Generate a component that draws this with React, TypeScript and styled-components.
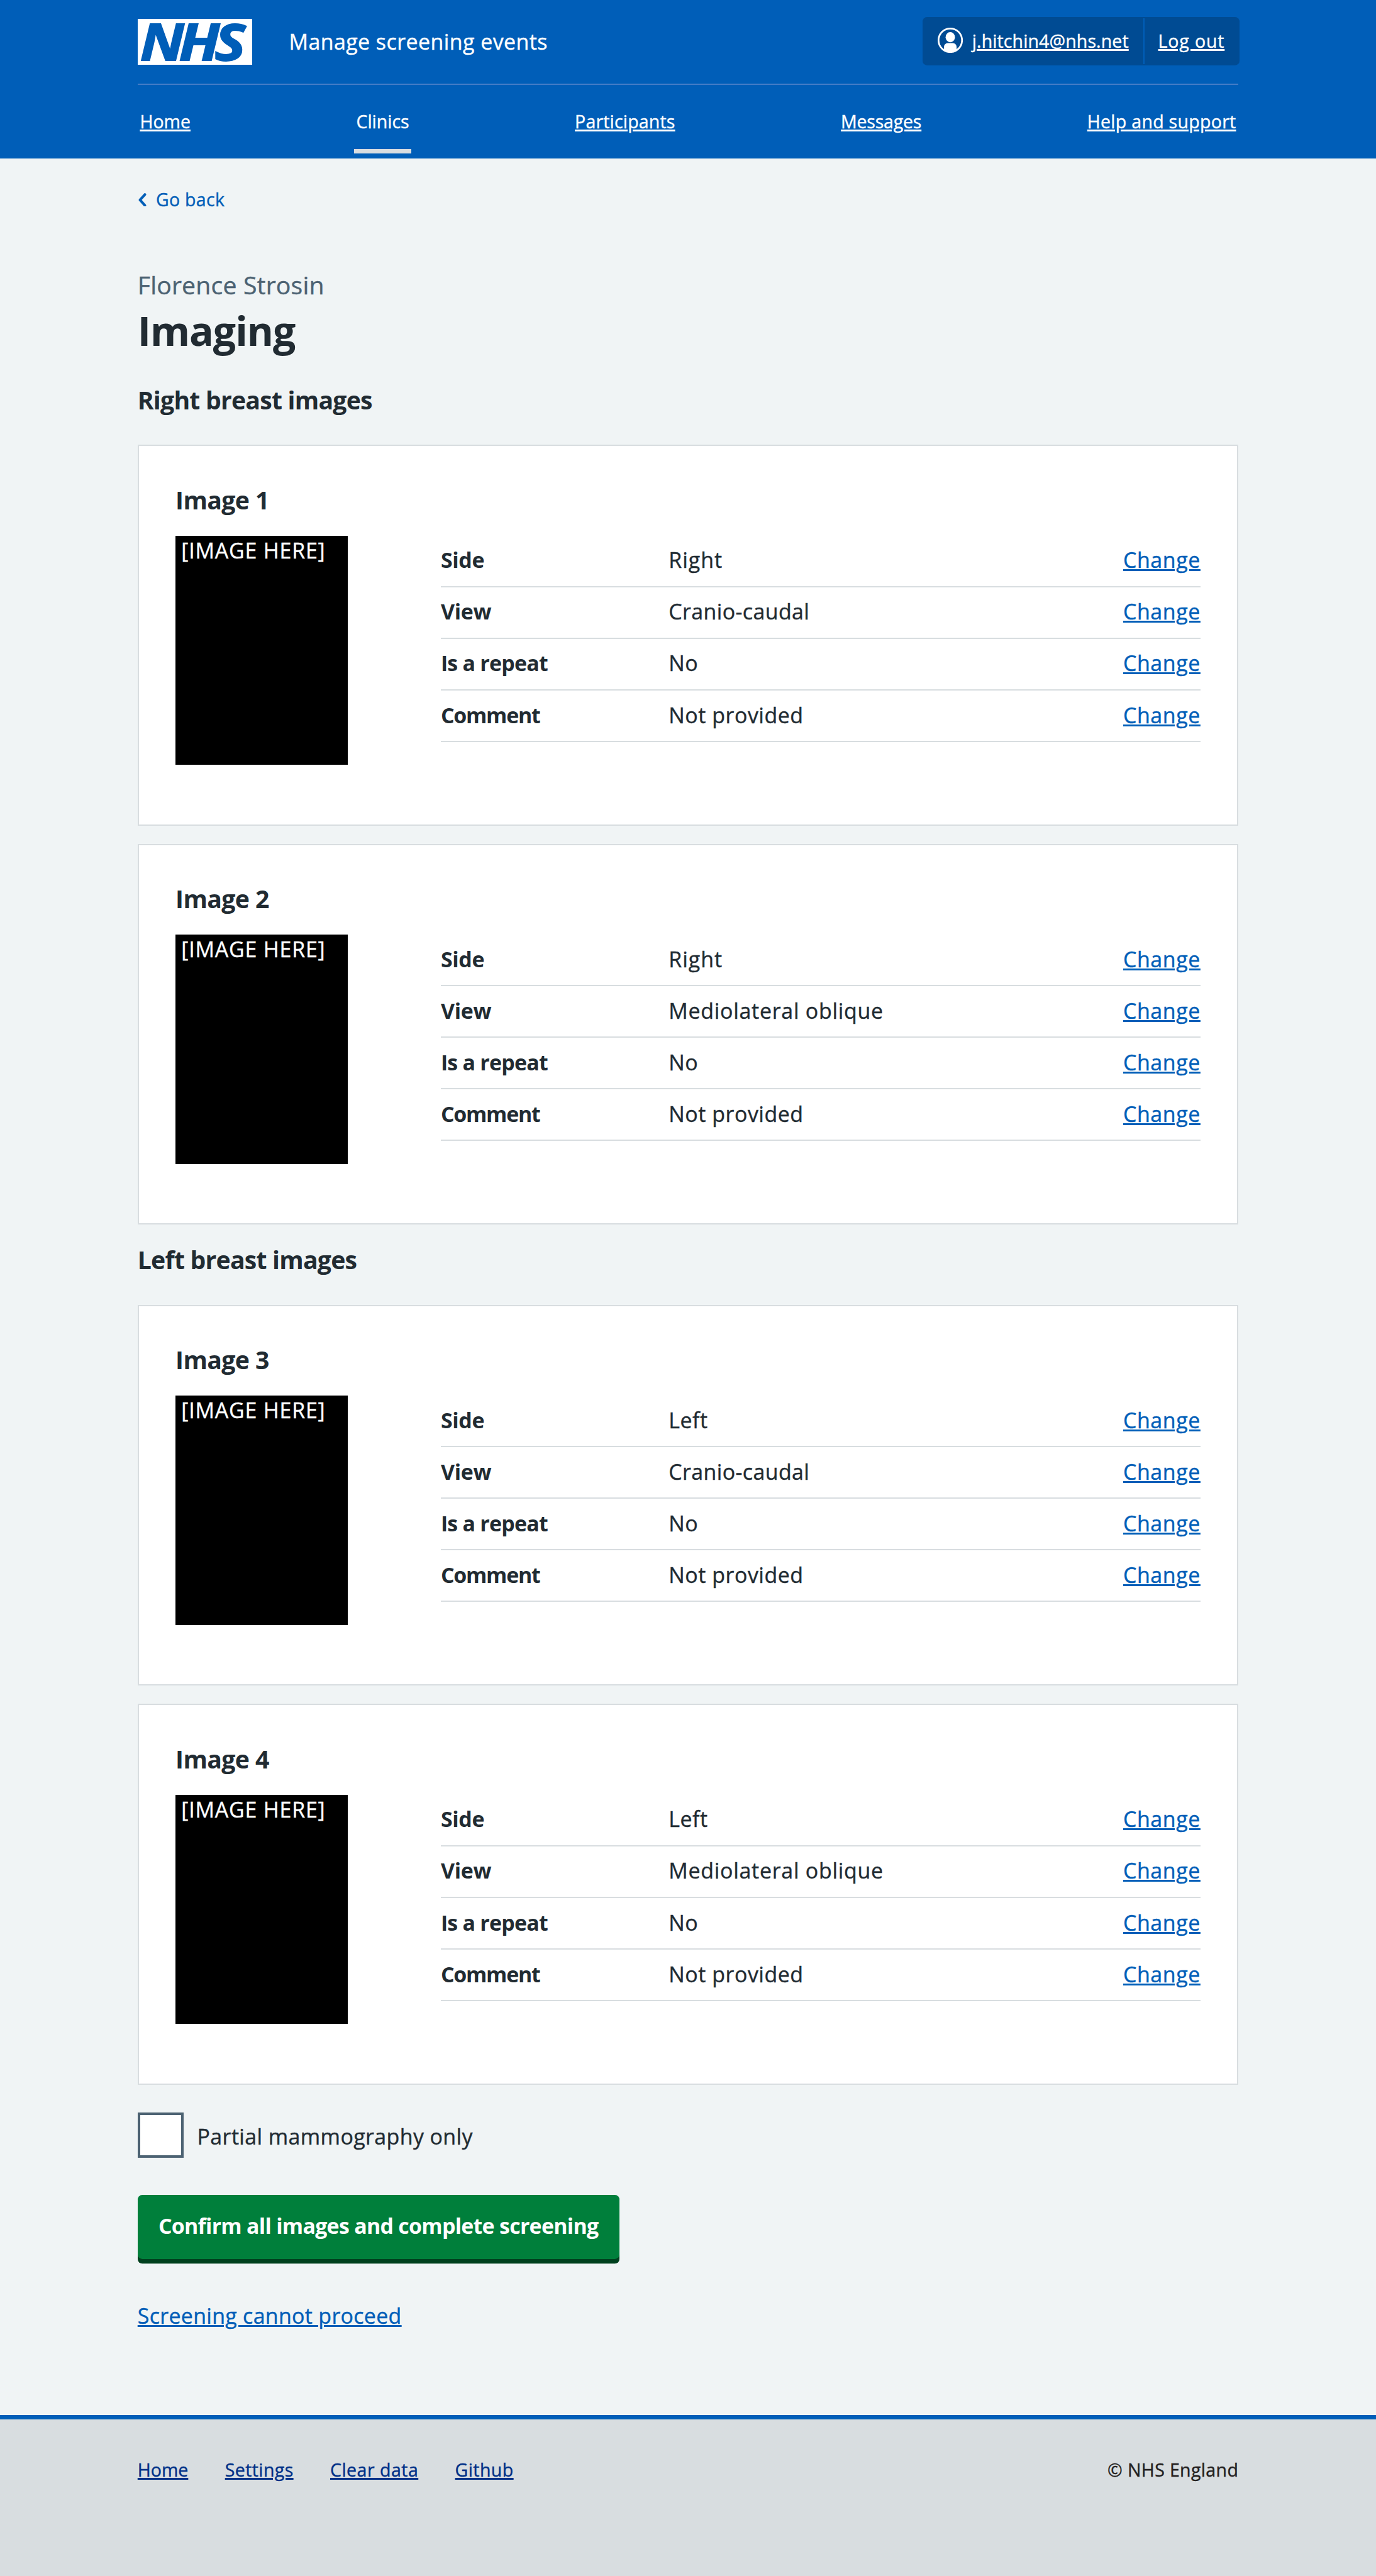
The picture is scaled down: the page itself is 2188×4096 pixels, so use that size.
import React from 'react';
import styled, { createGlobalStyle } from 'styled-components';

const SCALE = 0.9117;
const u = (n: number) => `${+(n * SCALE).toFixed(3)}px`;

const color = {
  blue: '#005eb8',
  blueShade: '#004b93',
  darkBlue: '#003087',
  text: '#212b32',
  secondary: '#4c6272',
  border: '#d8dde0',
  page: '#f0f4f5',
  green: '#007f3b',
  greenShade: '#00401e',
};

const GlobalStyle = createGlobalStyle`
  *, *::before, *::after { box-sizing: border-box; }
  body {
    margin: 0;
    background: ${color.page};
    color: ${color.text};
    font-family: "Open Sans", "Noto Sans", sans-serif;
    font-size: ${u(37.2)};
    line-height: ${u(56)};
    -webkit-text-stroke-width: 0.4px;
  }
  a { color: ${color.blue}; text-decoration-line: underline; text-decoration-thickness: ${u(3)}; text-underline-offset: ${u(2.6)}; }
  h1, h2, h3, dt, button, svg { -webkit-text-stroke-width: 0; }
  h1, h2, h3, p, ul, dl, dd, dt { margin: 0; padding: 0; }
  ul { list-style: none; }
`;

const Page = styled.div`
  display: flex;
  flex-direction: column;
  min-height: 4096px;
`;

const Container = styled.div`
  width: ${u(1920)};
  margin: 0 auto;
`;

const Track = styled.span<{ $em: number }>`
  letter-spacing: ${(p) => p.$em}em;
`;

/* Header */
const Header = styled.header`
  background: ${color.blue};
  color: #fff;
  height: ${u(276)};
`;

const Brand = styled.div`
  display: flex;
  align-items: flex-start;
  height: ${u(148)};
  border-bottom: 2px solid #447cc6;
`;

const Logo = styled.svg`
  display: block;
  width: ${u(200)};
  height: ${u(80)};
  margin-top: ${u(33)};
  background: #fff;
`;

const ServiceName = styled.span`
  margin: ${u(44.5)} auto 0 ${u(64)};
  letter-spacing: 0.0135em;
  white-space: nowrap;
`;

const Account = styled.div`
  display: flex;
  width: ${u(553)};
  height: ${u(84)};
  margin: ${u(30)} ${u(-2)} 0 0;
  padding: 2px 0;
  border-radius: ${u(8)};
  background: ${color.blueShade};
  font-size: ${u(31.3)};
  line-height: ${u(40)};
  white-space: nowrap;
  a { color: #fff; margin-top: ${u(19.5)}; }
`;

const AccountUser = styled.div`
  display: flex;
  align-items: flex-start;
  width: ${u(387)};
  padding-left: ${u(26)};
  border-right: 2px solid ${color.blue};
  svg { width: ${u(44)}; height: ${u(44)}; margin: ${u(16)} ${u(16.5)} 0 0; }
`;

const AccountAction = styled.div`
  display: flex;
  align-items: flex-start;
  padding-left: ${u(24)};
`;

const Nav = styled.ul`
  display: flex;
  justify-content: space-between;
  font-size: ${u(31.3)};
  line-height: ${u(40)};
`;

const NavItem = styled.li<{ $current?: boolean }>`
  height: ${u(120)};
  padding: ${u(44)} ${u(4)} 0;
  border-bottom: ${u(8)} solid ${(p) => (p.$current ? color.border : 'transparent')};
  a { color: #fff; text-decoration-line: ${(p) => (p.$current ? 'none' : 'underline')}; }
`;

/* Main */
const Main = styled.main`
  display: flex;
  flex-direction: column;
  align-items: flex-start;
`;

const BackLink = styled.a`
  && { display: flex; align-items: center; text-decoration: none; }
  margin-top: ${u(51.5)};
  font-size: ${u(31.3)};
  line-height: ${u(40)};
  letter-spacing: 0.01em;
  svg { width: ${u(16)}; height: ${u(24)}; margin: ${u(1.5)} ${u(16)} 0 0; }
`;

const Caption = styled.p`
  margin-top: ${u(99.6)};
  font-size: ${u(43)};
  line-height: ${u(60)};
  letter-spacing: 0.004em;
  color: ${color.secondary};
`;

const Title = styled.h1`
  margin-top: ${u(8.8)};
  font-size: ${u(70.5)};
  line-height: ${u(80)};
  letter-spacing: -0.0161em;
`;

const SectionTitle = styled.h2<{ $top: number }>`
  margin: ${(p) => u(p.$top)} 0 ${u(48.2)};
  font-size: ${u(43)};
  line-height: ${u(60)};
  letter-spacing: -0.02em;
`;

const CardStack = styled.div`
  display: flex;
  flex-direction: column;
  align-self: stretch;
  gap: ${u(32)};
`;

const Card = styled.section`
  height: ${u(664)};
  padding: ${u(63.8)} ${u(64)} 0;
  border: 2px solid ${color.border};
  background: #fff;
`;

const CardTitle = styled.h3`
  margin-bottom: ${u(32.2)};
  font-size: ${u(43)};
  line-height: ${u(60)};
  letter-spacing: -0.016em;
`;

const CardBody = styled.div`
  display: flex;
  justify-content: space-between;
  align-items: flex-start;
`;

const Placeholder = styled.div`
  width: ${u(300)};
  height: ${u(400)};
  padding-left: ${u(10)};
  background: #000;
  color: #fff;
  line-height: ${u(52)};
  letter-spacing: 0.024em;
  white-space: nowrap;
`;

const Summary = styled.dl`
  width: ${u(1325)};
`;

const SummaryRow = styled.div`
  display: grid;
  grid-template-columns: ${u(397.5)} 1fr auto;
  height: ${u(90)};
  padding-top: ${u(15.2)};
  border-bottom: 2px solid ${color.border};
`;

const Key = styled.dt<{ $em: number }>`
  font-weight: 700;
  letter-spacing: ${(p) => p.$em}em;
`;

const Value = styled.dd<{ $em: number }>`
  letter-spacing: ${(p) => p.$em}em;
`;

const Action = styled.dd`
  letter-spacing: 0.018em;
`;

const CheckRow = styled.label`
  display: flex;
  align-items: center;
  gap: ${u(24)};
  margin-top: ${u(48)};
  letter-spacing: 0.012em;
  span { margin-top: ${u(6.2)}; }
`;

const Checkbox = styled.input`
  appearance: none;
  width: ${u(80)};
  height: ${u(80)};
  margin: 0;
  border: 4px solid ${color.secondary};
  border-radius: 0;
  background: #fff;
`;

const Confirm = styled.button`
  width: ${u(840)};
  height: ${u(112)};
  margin-top: ${u(64)};
  padding: 0 0 ${u(2)};
  border: 0;
  border-radius: ${u(8)};
  background: ${color.green};
  box-shadow: 0 ${u(8)} 0 ${color.greenShade};
  color: #fff;
  font: inherit;
  font-weight: 700;
  letter-spacing: -0.021em;
  white-space: nowrap;
`;

const Decline = styled.a`
  margin: ${u(71.6)} 0 ${u(144.4)};
  letter-spacing: 0.0095em;
`;

/* Footer */
const Footer = styled.footer`
  flex: 1;
  border-top: ${u(8)} solid ${color.blue};
  background: ${color.border};
  color: #231f20;
  font-size: ${u(31.3)};
  line-height: ${u(40)};
  a { color: ${color.darkBlue}; }
`;

const FooterRow = styled.div`
  display: flex;
  justify-content: space-between;
  padding-top: ${u(68.4)};
`;

const FooterLinks = styled.ul`
  display: flex;
  gap: ${u(64)};
`;

const NhsLogo = () => (
  <Logo viewBox="0 0 200 80" role="img" aria-label="NHS">
    <text
      x="3.7 63 117.8"
      y="72"
      transform="scale(1.14 1)"
      fontFamily="Open Sans"
      fontSize="89"
      fontWeight="700"
      fontStyle="italic"
      fill={color.blue}
      stroke={color.blue}
      strokeWidth="2"
    >
      NHS
    </text>
  </Logo>
);

const UserIcon = () => (
  <svg viewBox="0 0 44 44" aria-hidden="true">
    <clipPath id="user-clip">
      <circle cx="22" cy="22" r="21" />
    </clipPath>
    <circle cx="22" cy="22" r="20.5" fill="none" stroke="#fff" strokeWidth="3" />
    <ellipse cx="22" cy="16.6" rx="8.2" ry="8.8" fill="#fff" />
    <path d="M11 44V33.500a6.500 6.500 0 0 1 6.500-6.500h9a6.500 6.500 0 0 1 6.500 6.500V44z" fill="#fff" clipPath="url(#user-clip)" />
  </svg>
);

const nav = [
  { label: 'Home', em: 0 },
  { label: 'Clinics', em: -0.001, current: true },
  { label: 'Participants', em: 0.006 },
  { label: 'Messages', em: -0.007 },
  { label: 'Help and support', em: 0.01 },
];

const footerLinks = [
  { label: 'Home', em: 0 },
  { label: 'Settings', em: 0.014 },
  { label: 'Clear data', em: 0.017 },
  { label: 'Github', em: 0.015 },
];

const tracking: Record<string, number> = {
  Side: -0.008,
  View: -0.008,
  'Is a repeat': -0.022,
  Comment: -0.036,
  Right: 0.03,
  'Cranio-caudal': 0.012,
  'Not provided': 0.016,
  'Mediolateral oblique': 0.022,
};

const ImageCard = ({ n, side, view }: { n: number; side: string; view: string }) => {
  const rows = [
    ['Side', side],
    ['View', view],
    ['Is a repeat', 'No'],
    ['Comment', 'Not provided'],
  ];
  return (
    <Card>
      <CardTitle>Image {n}</CardTitle>
      <CardBody>
        <Placeholder>[IMAGE HERE]</Placeholder>
        <Summary>
          {rows.map(([key, value]) => (
            <SummaryRow key={key}>
              <Key $em={tracking[key]}>{key}</Key>
              <Value $em={tracking[value] ?? 0.015}>{value}</Value>
              <Action>
                <a href="#">Change</a>
              </Action>
            </SummaryRow>
          ))}
        </Summary>
      </CardBody>
    </Card>
  );
};

export default function App() {
  return (
    <Page>
      <GlobalStyle />
      <Header>
        <Container>
          <Brand>
            <NhsLogo />
            <ServiceName>Manage screening events</ServiceName>
            <Account>
              <AccountUser>
                <UserIcon />
                <a href="#"><Track $em={0.004}>j.hitchin4@nhs.net</Track></a>
              </AccountUser>
              <AccountAction>
                <a href="#"><Track $em={0.03}>Log out</Track></a>
              </AccountAction>
            </Account>
          </Brand>
          <Nav>
            {nav.map((item) => (
              <NavItem key={item.label} $current={item.current}>
                <a href="#"><Track $em={item.em}>{item.label}</Track></a>
              </NavItem>
            ))}
          </Nav>
        </Container>
      </Header>
      <Container>
        <Main>
          <BackLink href="#">
            <svg viewBox="0 0 16 24" aria-hidden="true">
              <path d="M12.500 2.500L4 12l8.500 9.500" fill="none" stroke={color.blue} strokeWidth="4.500" strokeLinecap="round" strokeLinejoin="round" />
            </svg>
            Go back
          </BackLink>
          <Caption>Florence Strosin</Caption>
          <Title>Imaging</Title>
          <SectionTitle $top={51.8}>Right breast images</SectionTitle>
          <CardStack>
            <ImageCard n={1} side="Right" view="Cranio-caudal" />
            <ImageCard n={2} side="Right" view="Mediolateral oblique" />
          </CardStack>
          <SectionTitle $top={31.8}>Left breast images</SectionTitle>
          <CardStack>
            <ImageCard n={3} side="Left" view="Cranio-caudal" />
            <ImageCard n={4} side="Left" view="Mediolateral oblique" />
          </CardStack>
          <CheckRow>
            <Checkbox type="checkbox" />
            <span>Partial mammography only</span>
          </CheckRow>
          <Confirm>Confirm all images and complete screening</Confirm>
          <Decline href="#">Screening cannot proceed</Decline>
        </Main>
      </Container>
      <Footer>
        <Container>
          <FooterRow>
            <FooterLinks>
              {footerLinks.map((item) => (
                <li key={item.label}>
                  <a href="#"><Track $em={item.em}>{item.label}</Track></a>
                </li>
              ))}
            </FooterLinks>
            <Track $em={0.0125}>© NHS England</Track>
          </FooterRow>
        </Container>
      </Footer>
    </Page>
  );
}
